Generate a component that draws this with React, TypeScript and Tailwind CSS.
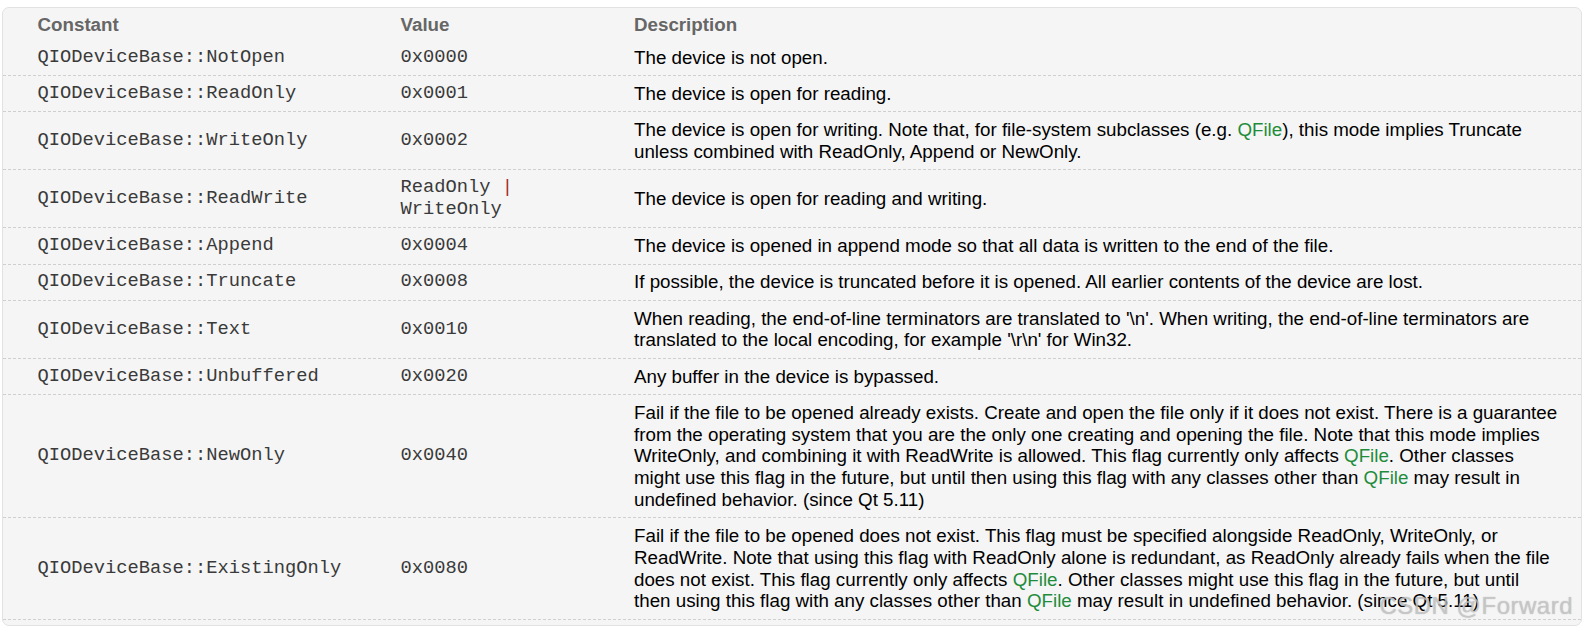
import type { ReactNode } from 'react';

interface FlagRow {
  name: string;
  value: ReactNode;
  desc: ReactNode;
}

function QLink({ children }: { children: ReactNode }) {
  return <span className="text-[#1f8c3b]">{children}</span>;
}

const rows: FlagRow[] = [
  { name: 'NotOpen', value: '0x0000', desc: 'The device is not open.' },
  { name: 'ReadOnly', value: '0x0001', desc: 'The device is open for reading.' },
  {
    name: 'WriteOnly',
    value: '0x0002',
    desc: (
      <>
        The device is open for writing. Note that, for file-system subclasses (e.g. <QLink>QFile</QLink>), this mode
        implies Truncate unless combined with ReadOnly, Append or NewOnly.
      </>
    ),
  },
  {
    name: 'ReadWrite',
    value: (
      <>
        ReadOnly <span className="text-[#a52a2a]">|</span> WriteOnly
      </>
    ),
    desc: 'The device is open for reading and writing.',
  },
  {
    name: 'Append',
    value: '0x0004',
    desc: 'The device is opened in append mode so that all data is written to the end of the file.',
  },
  {
    name: 'Truncate',
    value: '0x0008',
    desc: 'If possible, the device is truncated before it is opened. All earlier contents of the device are lost.',
  },
  {
    name: 'Text',
    value: '0x0010',
    desc: "When reading, the end-of-line terminators are translated to '\\n'. When writing, the end-of-line terminators are translated to the local encoding, for example '\\r\\n' for Win32.",
  },
  { name: 'Unbuffered', value: '0x0020', desc: 'Any buffer in the device is bypassed.' },
  {
    name: 'NewOnly',
    value: '0x0040',
    desc: (
      <>
        Fail if the file to be opened already exists. Create and open the file only if it does not exist. There is a
        guarantee from the operating system that you are the only one creating and opening the file. Note that this
        mode implies WriteOnly, and combining it with ReadWrite is allowed. This flag currently only affects{' '}
        <QLink>QFile</QLink>. Other classes might use this flag in the future, but until then using this flag with any
        classes other than <QLink>QFile</QLink> may result in undefined behavior. (since Qt 5.11)
      </>
    ),
  },
  {
    name: 'ExistingOnly',
    value: '0x0080',
    desc: (
      <>
        Fail if the file to be opened does not exist. This flag must be specified alongside ReadOnly, WriteOnly, or
        ReadWrite. Note that using this flag with ReadOnly alone is redundant, as ReadOnly already fails when the file
        does not exist. This flag currently only affects <QLink>QFile</QLink>. Other classes might use this flag in
        the future, but until then using this flag with any classes other than <QLink>QFile</QLink> may result in
        undefined behavior. (since Qt 5.11)
      </>
    ),
  },
];

const sans = "font-['Liberation_Sans',Arial,sans-serif]";
const mono = "font-['Liberation_Mono','Courier_New',monospace]";

export default function App() {
  return (
    <div className="min-h-[630px] bg-white pt-[7px] pl-[2px]">
      <div
        className={`relative w-[1580px] rounded-[7px] border border-[#e2e2e2] bg-[#f5f5f5] pb-[5px] ${sans} text-[18.75px] leading-[21.7px]`}
      >
        {/* header */}
        <div className="flex pt-[6px] pb-[4px] font-bold text-[#666666]">
          <div className="w-[385px] shrink-0 pl-[34.5px]">Constant</div>
          <div className="w-[233.5px] shrink-0 pl-[12.5px]">Value</div>
          <div className="flex-1 pl-[12.5px]">Description</div>
        </div>

        {rows.map((r) => (
          <div key={r.name} className="flex items-center border-b border-dashed border-[#cfcfcf] py-[6.8px]">
            <div className={`w-[385px] shrink-0 pl-[34.5px] ${mono} text-[#3a3a3a]`}>QIODeviceBase::{r.name}</div>
            <div className={`w-[233.5px] shrink-0 pl-[12.5px] pr-[12px] ${mono} text-[#3a3a3a]`}>{r.value}</div>
            <div className="flex-1 pl-[12.5px] pr-[22.5px] text-black">{r.desc}</div>
          </div>
        ))}

        {/* watermark */}
        <div className="pointer-events-none absolute right-[8px] bottom-[7px] text-[24px] leading-none tracking-[0.5px] text-[rgba(205,205,205,0.7)] [text-shadow:0_0_1px_rgba(120,120,120,0.55)]">
          CSDN @Forward
        </div>
      </div>
    </div>
  );
}
